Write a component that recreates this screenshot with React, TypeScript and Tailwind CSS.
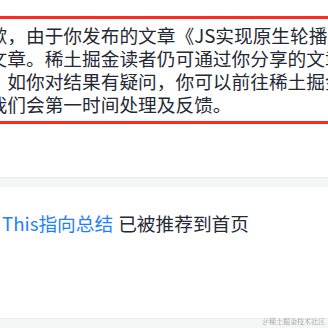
export default function App() {
  const cjk = { fontFamily: '"Microsoft YaHei", "Noto Sans CJK SC", "Noto Sans", sans-serif' };

  const lines = [
    "歉，由于你发布的文章《JS实现原生轮播图》",
    "文章。稀土掘金读者仍可通过你分享的文章链接",
    "。如你对结果有疑问，你可以前往稀土掘金",
    "我们会第一时间处理及反馈。",
  ];

  return (
    <div className="relative w-[328px] h-[328px] overflow-hidden bg-white" style={cjk}>
      <div className="pt-4">
        {/* notice box, wider than the view so the sides are cut */}
        <div className="-ml-[30px] w-[400px] border-y-[3px] border-[#ff2a1f] pt-[4px] pb-[6px] pl-[18.6px]">
          {lines.map((line, i) => (
            <div key={i} className="whitespace-nowrap text-[18.7px] leading-[23px] text-[#252933]">
              {line}
            </div>
          ))}
        </div>
      </div>

      <div className="h-[53px]" />
      <div className="h-[10px] bg-[#f4f5f5] border-t border-[#ebeced]" />

      <div className="h-[131px] pt-[24px] pl-[2px]">
        <div className="whitespace-nowrap text-[18.7px] leading-[24px]">
          <span className="text-[#1e80ff]">This指向总结</span>
          <span className="ml-[5px] text-[#252933]">已被推荐到首页</span>
        </div>
      </div>

      <div className="h-[10px] bg-[#f4f5f5] border-t border-[#ebeced]" />

      {/* watermark */}
      <div
        className="absolute right-[3px] bottom-[2px] text-[7px] leading-[9px] text-[#9a9a9a] whitespace-nowrap"
        style={{ fontFamily: '"Noto Serif CJK SC", "Noto Sans CJK SC", serif' }}
      >
        @稀土掘金技术社区
      </div>
    </div>
  );
}
